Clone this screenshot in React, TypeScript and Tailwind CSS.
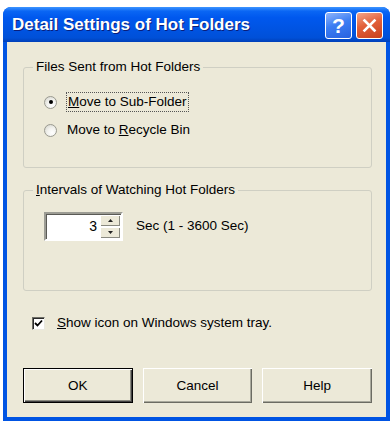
import React from "react";

const ui = { fontFamily: '"Liberation Sans", Arial, sans-serif' };

function Radio({ checked }: { checked?: boolean }) {
  return (
    <span className="relative flex h-[13px] w-[13px] shrink-0 items-center justify-center rounded-full border border-[#9a9a90] bg-[radial-gradient(circle_at_65%_70%,#ffffff_0%,#f2f2ee_45%,#cfcfc6_100%)]">
      {checked && <span className="h-[4px] w-[4px] rounded-full bg-black" />}
    </span>
  );
}

function GroupBox({ title, children, height }: { title: React.ReactNode; children: React.ReactNode; height: string }) {
  return (
    <div className={`relative rounded-[3px] border border-[#cfcfc3] ${height}`}>
      <span className="absolute -top-[9px] left-[9px] bg-[#ECE9D8] px-[3px] leading-[16px]">{title}</span>
      {children}
    </div>
  );
}

function Button({ label, isDefault }: { label: string; isDefault?: boolean }) {
  return (
    <div
      className={`flex h-[35px] items-center justify-center bg-[#ECE9D8] ${
        isDefault
          ? "border border-black shadow-[inset_1px_1px_0_#ffffff,inset_-1px_-1px_0_#404040,inset_-2px_-2px_0_#8a8a80]"
          : "shadow-[inset_1px_1px_0_#ffffff,inset_-1px_-1px_0_#6b6b62,inset_-2px_-2px_0_#a9a99c]"
      } w-[110px]`}
    >
      {label}
    </div>
  );
}

export default function App() {
  return (
    <div className="h-[425px] w-[392px] bg-white pl-[3px] pt-[7px] text-[13.5px] text-black" style={ui}>
      <div className="flex h-[414px] w-[387px] flex-col overflow-hidden rounded-t-[8px] bg-[#0054E3]">
        {/* title bar */}
        <div className="flex h-[35px] shrink-0 items-center justify-between bg-[linear-gradient(180deg,#3d95ff_0%,#0a66f4_12%,#0058ee_30%,#0054e3_60%,#0050d8_88%,#003fb8_100%)] pl-[9px] pr-[7px]">
          <span className="text-[17px] font-bold text-white [text-shadow:1px_1px_0_#0a1e7a]">
            Detail Settings of Hot Folders
          </span>
          <div className="flex gap-[4px] pt-[2px]">
            <div className="flex h-[27px] w-[27px] items-center justify-center rounded-[3px] border border-white bg-[linear-gradient(160deg,#8fb4fb_0%,#3c7ef3_45%,#2862e0_100%)] text-[21px] font-bold leading-none text-white">
              ?
            </div>
            <div className="flex h-[27px] w-[27px] items-center justify-center rounded-[3px] border border-white bg-[linear-gradient(160deg,#f3a58a_0%,#e2603a_45%,#c8401c_100%)]">
              <svg width="15" height="15" viewBox="0 0 15 15">
                <path d="M2.5 2.5 L12.5 12.5 M12.5 2.5 L2.5 12.5" stroke="white" strokeWidth="2.6" strokeLinecap="square" />
              </svg>
            </div>
          </div>
        </div>

        {/* client */}
        <div className="mx-[4px] flex h-[375px] flex-col bg-[#ECE9D8] pl-[16px] pr-[14px] pt-[25px]">
          <GroupBox title="Files Sent from Hot Folders" height="h-[101px]">
            <div className="flex flex-col gap-[6px] pl-[20px] pt-[23px]">
              <div className="flex h-[22px] items-center gap-[9px]">
                <Radio checked />
                <span className="border border-dotted border-[#555] px-[1px] leading-[18px]">
                  <u>M</u>ove to Sub-Folder
                </span>
              </div>
              <div className="flex h-[22px] items-center gap-[10px]">
                <Radio />
                <span className="leading-[18px]">
                  Move to <u>R</u>ecycle Bin
                </span>
              </div>
            </div>
          </GroupBox>

          <div className="mt-[22px]">
            <GroupBox
              title={
                <>
                  <u>I</u>ntervals of Watching Hot Folders
                </>
              }
              height="h-[101px]"
            >
              <div className="flex items-center gap-[13px] pl-[20px] pt-[21px]">
                <div className="flex h-[29px] w-[79px] items-center border-2 border-b-white border-l-[#9c9c94] border-r-white border-t-[#9c9c94] bg-white shadow-[inset_1px_1px_0_#5a5a55]">
                  <span className="flex-1 pr-[3px] text-right text-[14px]">3</span>
                  <div className="flex h-full w-[21px] flex-col gap-[1px] py-[1px] pr-[1px]">
                    <div className="flex flex-1 items-center justify-center bg-[#ECE9D8] shadow-[inset_1px_1px_0_#fff,inset_-1px_-1px_0_#8a8a80]">
                      <svg width="5" height="3" viewBox="0 0 5 3">
                        <path d="M2.5 0 L5 3 L0 3 Z" fill="#222" />
                      </svg>
                    </div>
                    <div className="flex flex-1 items-center justify-center bg-[#ECE9D8] shadow-[inset_1px_1px_0_#fff,inset_-1px_-1px_0_#8a8a80]">
                      <svg width="5" height="3" viewBox="0 0 5 3">
                        <path d="M0 0 L5 0 L2.5 3 Z" fill="#222" />
                      </svg>
                    </div>
                  </div>
                </div>
                <span>Sec (1 - 3600 Sec)</span>
              </div>
            </GroupBox>
          </div>

          <div className="mt-[22px] flex items-center gap-[12px] pl-[9px]">
            <span className="flex h-[13px] w-[13px] items-center justify-center border border-b-[#e8e8e0] border-l-[#6e6e66] border-r-[#e8e8e0] border-t-[#6e6e66] bg-white shadow-[inset_1px_1px_0_#2a2a2a]">
              <svg width="9" height="9" viewBox="0 0 9 9">
                <path d="M1 4 L3.5 6.5 L8 1.5" stroke="#000" strokeWidth="1.8" fill="none" />
              </svg>
            </span>
            <span>
              <u>S</u>how icon on Windows system tray.
            </span>
          </div>

          <div className="mt-[35px] flex gap-[10px]">
            <Button label="OK" isDefault />
            <Button label="Cancel" />
            <Button label="Help" />
          </div>
        </div>
      </div>
    </div>
  );
}
